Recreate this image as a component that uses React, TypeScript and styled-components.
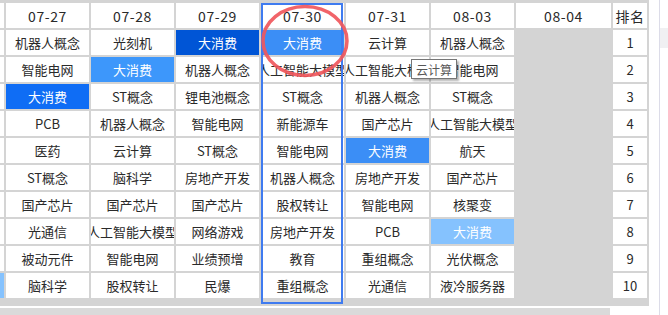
import { ReactElement } from 'react';
import styled, { createGlobalStyle } from 'styled-components';

type Tone = 'plain' | 'dark' | 'strong' | 'mid' | 'soft' | 'light' | 'empty';

type CellData = { text: string; tone?: Tone };

const GlobalStyle = createGlobalStyle`
	html, body {
		margin: 0;
		padding: 0;
		background: #ffffff;
	}
	body {
		font-family: "Noto Sans CJK SC", "Noto Sans", sans-serif;
		color: #2a2a2a;
	}
`;

const dates = ['07-27', '07-28', '07-29', '07-30', '07-31', '08-03', '08-04'];

// rows of hot sectors, one entry per date column
const rows: CellData[][] = [
	[{ text: '机器人概念' }, { text: '光刻机' }, { text: '大消费', tone: 'dark' }, { text: '大消费', tone: 'mid' }, { text: '云计算' }, { text: '机器人概念' }],
	[{ text: '智能电网' }, { text: '大消费', tone: 'soft' }, { text: '机器人概念' }, { text: '人工智能大模型' }, { text: '人工智能大模型' }, { text: '智能电网' }],
	[{ text: '大消费', tone: 'strong' }, { text: 'ST概念' }, { text: '锂电池概念' }, { text: 'ST概念' }, { text: '机器人概念' }, { text: 'ST概念' }],
	[{ text: 'PCB' }, { text: '机器人概念' }, { text: '智能电网' }, { text: '新能源车' }, { text: '国产芯片' }, { text: '人工智能大模型' }],
	[{ text: '医药' }, { text: '云计算' }, { text: 'ST概念' }, { text: '智能电网' }, { text: '大消费', tone: 'mid' }, { text: '航天' }],
	[{ text: 'ST概念' }, { text: '脑科学' }, { text: '房地产开发' }, { text: '机器人概念' }, { text: '房地产开发' }, { text: '国产芯片' }],
	[{ text: '国产芯片' }, { text: '国产芯片' }, { text: '国产芯片' }, { text: '股权转让' }, { text: '智能电网' }, { text: '核聚变' }],
	[{ text: '光通信' }, { text: '人工智能大模型' }, { text: '网络游戏' }, { text: '房地产开发' }, { text: 'PCB' }, { text: '大消费', tone: 'light' }],
	[{ text: '被动元件' }, { text: '智能电网' }, { text: '业绩预增' }, { text: '教育' }, { text: '重组概念' }, { text: '光伏概念' }],
	[{ text: '脑科学' }, { text: '股权转让' }, { text: '民爆' }, { text: '重组概念' }, { text: '光通信' }, { text: '液冷服务器' }],
];

const toneBg: Record<Tone, string> = {
	plain: '#ffffff',
	dark: '#0055d6',
	strong: '#0f6df5',
	mid: '#3b8ef6',
	soft: '#3d97fb',
	light: '#85c2fe',
	empty: 'transparent',
};

export default function App(): ReactElement {
	return (
		<>
			<GlobalStyle />
			<Page>
				<TableArea>
					<Grid>
						<Cell $tone="plain" />
						{dates.map((d) => (
							<HeadCell key={d}>{d}</HeadCell>
						))}
						<HeadCell>排名</HeadCell>
						{rows.map((row, i) => (
							<Row key={i} row={row} rank={i + 1} />
						))}
					</Grid>
					<ScrollTrack>
						<ScrollThumb />
					</ScrollTrack>
					<ColumnFocus />
					<Circle viewBox="0 0 90 74">
						<ellipse cx="45" cy="37" rx="42" ry="34.5" />
					</Circle>
					<Tooltip>云计算</Tooltip>
				</TableArea>
				<Divider />
				<SidePanel>
					<SideBand />
				</SidePanel>
			</Page>
		</>
	);
}

const Row = ({ row, rank }: { row: CellData[]; rank: number }): ReactElement => (
	<>
		<Cell $tone={rank === 10 ? 'light' : 'plain'} />
		{row.map((c, j) => (
			<Cell key={j} $tone={c.tone ?? 'plain'}>
				<span>{c.text}</span>
			</Cell>
		))}
		<Cell $tone="empty" />
		<Cell $tone="plain">{rank}</Cell>
	</>
);

const Page = styled.div`
	display: flex;
	width: 668px;
	height: 315px;
	overflow: hidden;
`;

const TableArea = styled.div`
	position: relative;
	width: 659px;
	flex: none;
`;

const Grid = styled.div`
	display: grid;
	grid-template-columns: 4px repeat(6, 83px) 95px 34px;
	grid-auto-rows: 25px;
	gap: 2px;
	width: max-content;
	padding: 3px 2px 8px 0;
	background: #d4d4d4;
`;

const Cell = styled.div<{ $tone: Tone }>`
	display: flex;
	align-items: center;
	justify-content: center;
	overflow: hidden;
	white-space: nowrap;
	font-size: 13px;
	background: ${(p) => toneBg[p.$tone]};
	color: ${(p) => (p.$tone === 'plain' || p.$tone === 'empty' ? '#2a2a2a' : '#ffffff')};

	span {
		flex: none;
	}
`;

const HeadCell = styled.div`
	display: flex;
	align-items: center;
	justify-content: center;
	background: #ffffff;
	font-size: 14px;
	letter-spacing: 0.6px;
	color: #2a2a2a;
	white-space: nowrap;
`;

const ScrollTrack = styled.div`
	margin-top: 2px;
	height: 9px;
	width: 649px;
	background: #ffffff;
`;

const ScrollThumb = styled.div`
	width: 610px;
	height: 9px;
	background: #dadada;
`;

const ColumnFocus = styled.div`
	position: absolute;
	left: 261px;
	top: 3px;
	width: 78px;
	height: 297px;
	border: 2px solid #3f7bf0;
	pointer-events: none;
`;

const Circle = styled.svg`
	position: absolute;
	left: 260px;
	top: 4px;
	width: 90px;
	height: 74px;
	overflow: visible;
	pointer-events: none;

	ellipse {
		fill: none;
		stroke: #f0575c;
		stroke-width: 3.5;
		opacity: 0.92;
	}
`;

const Tooltip = styled.div`
	position: absolute;
	left: 411px;
	top: 59px;
	height: 18px;
	padding: 0 4px;
	display: flex;
	align-items: center;
	font-size: 12px;
	color: #575757;
	background: #ffffff;
	border: 1px solid #767676;
	box-shadow: 2px 2px 2px rgba(0, 0, 0, 0.3);
	white-space: nowrap;
`;

const Divider = styled.div`
	width: 1px;
	flex: none;
	background: #dcdce8;
`;

const SidePanel = styled.div`
	flex: 1;
	padding-top: 28px;
`;

const SideBand = styled.div`
	height: 20px;
	background: #f0f0f2;
`;
